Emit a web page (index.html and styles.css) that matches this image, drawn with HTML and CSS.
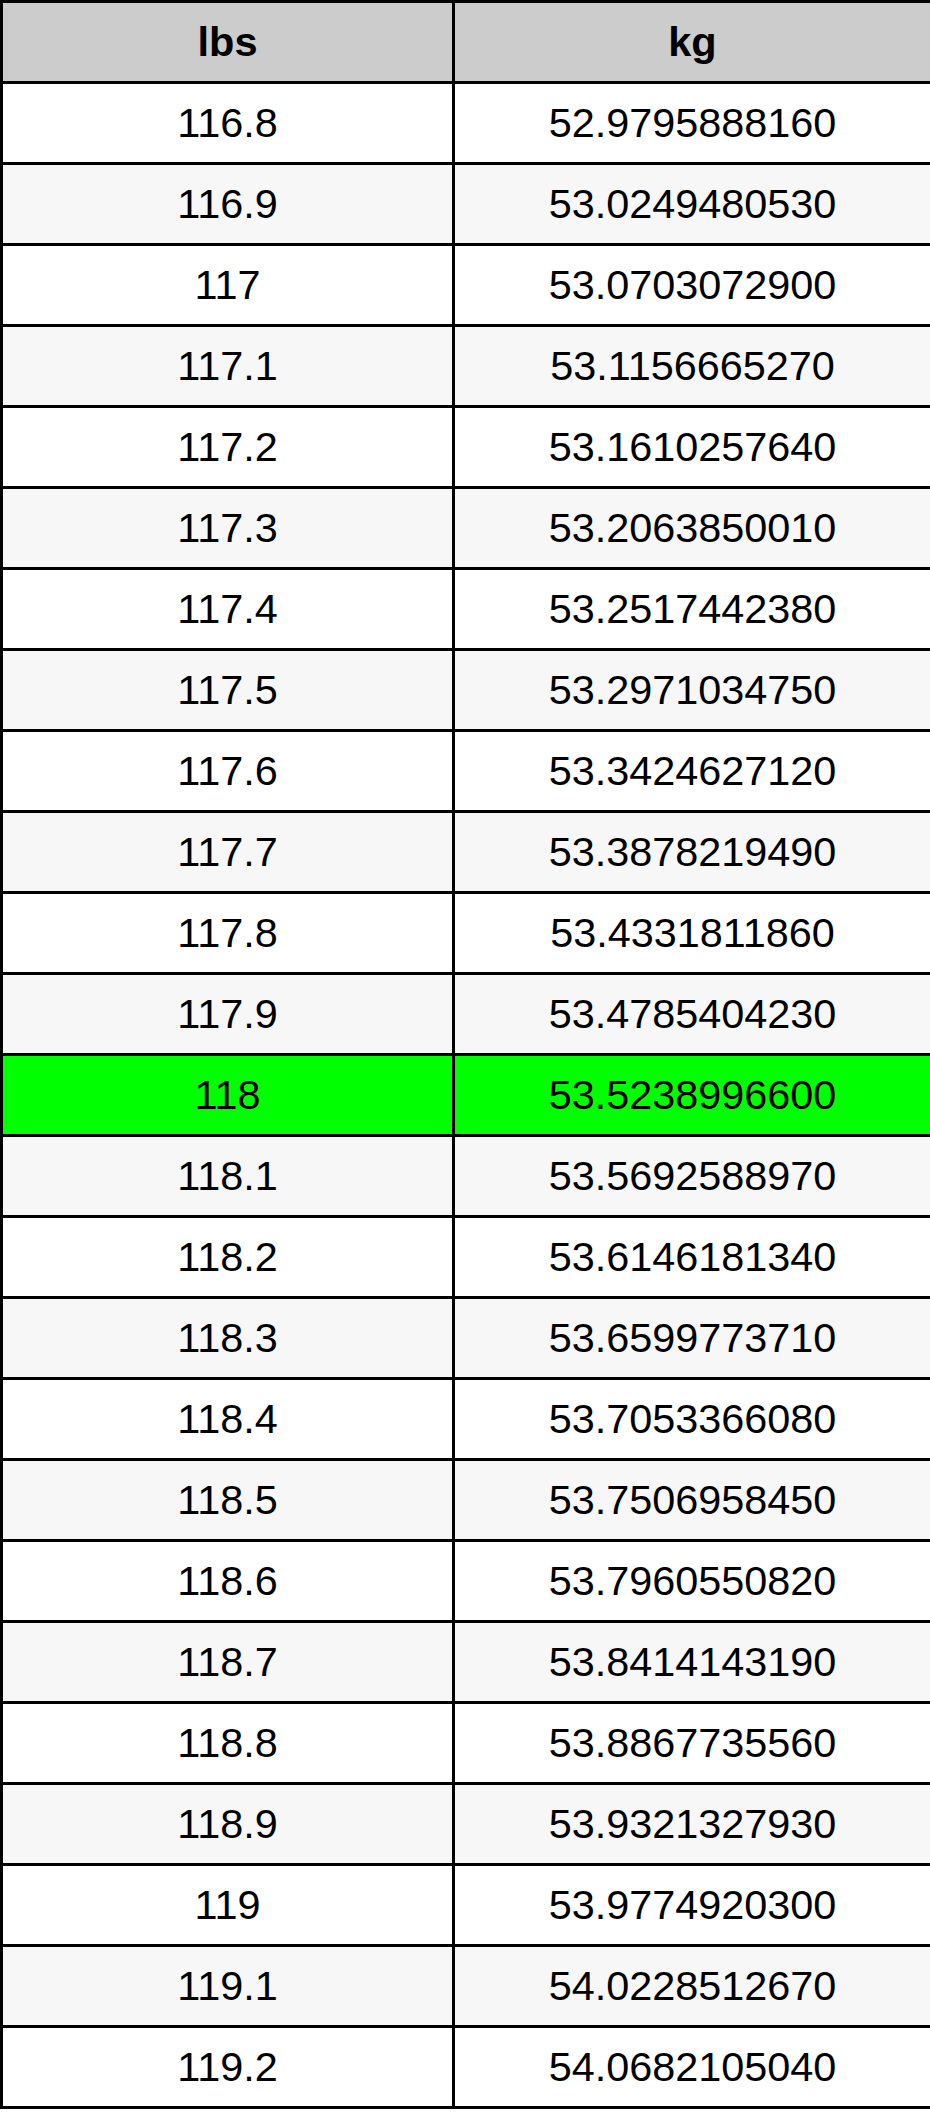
FILE: index.html
```html
<!DOCTYPE html>
<html>
<head>
<meta charset="utf-8">
<link rel="stylesheet" href="styles.css">
</head>
<body>
<table class="conv">
<colgroup><col class="c1"><col class="c2"></colgroup>
<thead>
<tr><th>lbs</th><th>kg</th></tr>
</thead>
<tbody>
<tr><td>116.8</td><td>52.9795888160</td></tr>
<tr><td>116.9</td><td>53.0249480530</td></tr>
<tr><td>117</td><td>53.0703072900</td></tr>
<tr><td>117.1</td><td>53.1156665270</td></tr>
<tr><td>117.2</td><td>53.1610257640</td></tr>
<tr><td>117.3</td><td>53.2063850010</td></tr>
<tr><td>117.4</td><td>53.2517442380</td></tr>
<tr><td>117.5</td><td>53.2971034750</td></tr>
<tr><td>117.6</td><td>53.3424627120</td></tr>
<tr><td>117.7</td><td>53.3878219490</td></tr>
<tr><td>117.8</td><td>53.4331811860</td></tr>
<tr><td>117.9</td><td>53.4785404230</td></tr>
<tr class="hl"><td>118</td><td>53.5238996600</td></tr>
<tr><td>118.1</td><td>53.5692588970</td></tr>
<tr><td>118.2</td><td>53.6146181340</td></tr>
<tr><td>118.3</td><td>53.6599773710</td></tr>
<tr><td>118.4</td><td>53.7053366080</td></tr>
<tr><td>118.5</td><td>53.7506958450</td></tr>
<tr><td>118.6</td><td>53.7960550820</td></tr>
<tr><td>118.7</td><td>53.8414143190</td></tr>
<tr><td>118.8</td><td>53.8867735560</td></tr>
<tr><td>118.9</td><td>53.9321327930</td></tr>
<tr><td>119</td><td>53.9774920300</td></tr>
<tr><td>119.1</td><td>54.0228512670</td></tr>
<tr><td>119.2</td><td>54.0682105040</td></tr>
</tbody>
</table>
</body>
</html>
```
FILE: styles.css
```css
html, body {
  margin: 0;
  padding: 0;
  background: #ffffff;
}
.conv {
  width: 930px;
  border-collapse: collapse;
  border: 3px solid #000;
  font-family: "Liberation Sans", Arial, sans-serif;
  font-size: 41.4px;
  color: #000;
  table-layout: fixed;
}
.c1 { width: 452px; }
.c2 { width: 478px; }
.conv th, .conv td {
  border: 3px solid #000;
  padding: 0;
  height: 78px;
  text-align: center;
  vertical-align: middle;
  line-height: 46px;
}
.conv th {
  background: #cccccc;
  font-weight: bold;
  font-size: 41.5px;
}
.conv tbody tr:nth-child(odd) td { background: #ffffff; }
.conv tbody tr:nth-child(even) td { background: #f7f7f7; }
.conv tbody tr.hl td { background: #00ff00; }
```
